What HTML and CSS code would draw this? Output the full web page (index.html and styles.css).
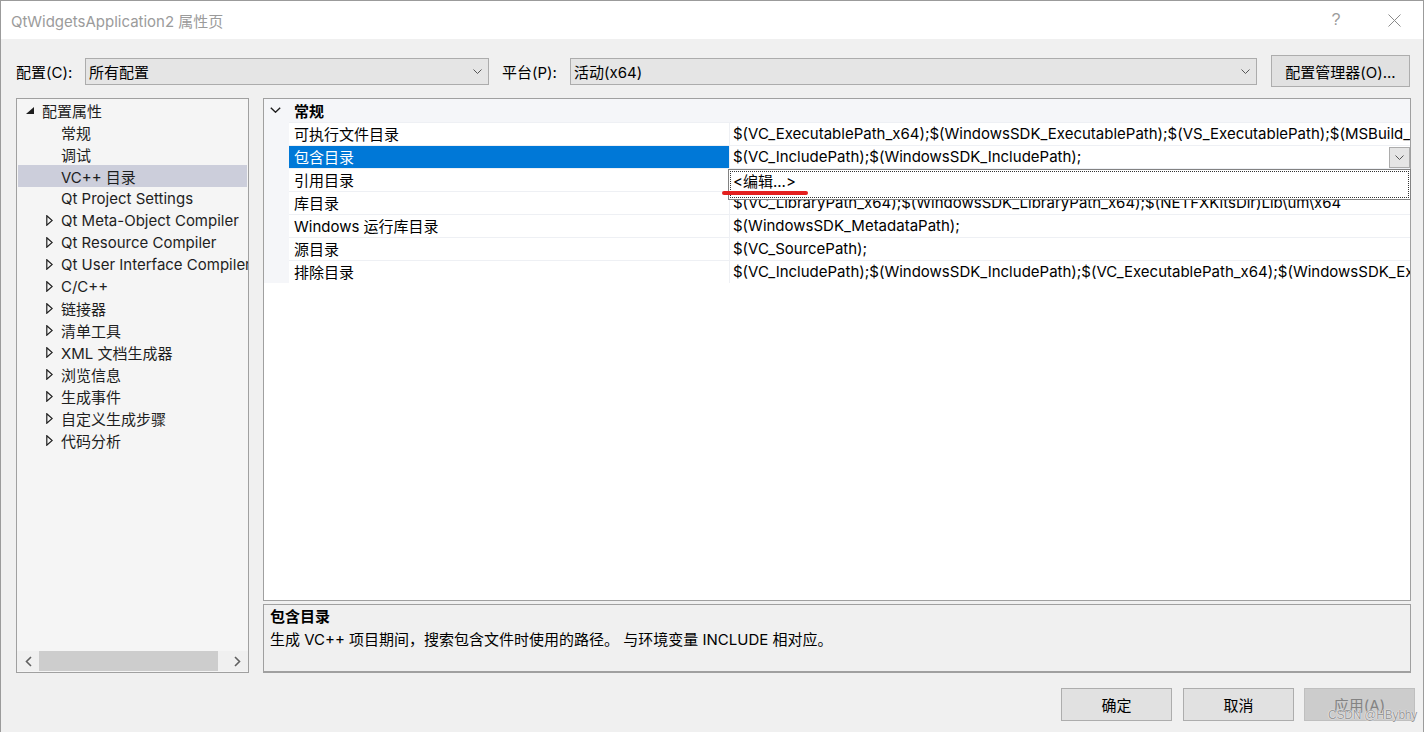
FILE: index.html
```html
<!DOCTYPE html>
<html lang="zh-CN">
<head>
<meta charset="utf-8">
<title>QtWidgetsApplication2 属性页</title>
<link rel="stylesheet" href="styles.css">
</head>
<body>
<div class="dialog">
  <div class="titlebar">
    <span class="title">QtWidgetsApplication2 属性页</span>
    <span class="tb-help">?</span>
    <span class="tb-close"><svg width="13" height="13" viewBox="0 0 13 13"><path d="M0.5 0.5 L12.5 12.5 M12.5 0.5 L0.5 12.5" stroke="#8a8a8a" stroke-width="1" fill="none"/></svg></span>
  </div>
  <div class="content">
    <div class="toolbar">
      <span class="lbl lbl1">配置(C):</span>
      <div class="select sel1"><span>所有配置</span><svg class="chev" width="9" height="5" viewBox="0 0 9 5"><path d="M0.5 0.5 L4.5 4.5 L8.5 0.5" stroke="#555" stroke-width="1" fill="none"/></svg></div>
      <span class="lbl lbl2">平台(P):</span>
      <div class="select sel2"><span>活动(x64)</span><svg class="chev" width="9" height="5" viewBox="0 0 9 5"><path d="M0.5 0.5 L4.5 4.5 L8.5 0.5" stroke="#555" stroke-width="1" fill="none"/></svg></div>
      <div class="btn btn-cm">配置管理器(O)...</div>
    </div>
    <div class="main">
      <div class="tree">
        <div class="tree-list">
          <div class="ti root"><svg class="tri-down" width="8" height="7" viewBox="0 0 8 7"><path d="M8 0 L8 7 L0 7 Z" fill="#1e1e1e"/></svg><span>配置属性</span></div>
          <div class="ti leaf">常规</div>
          <div class="ti leaf">调试</div>
          <div class="ti leaf sel">VC++ 目录</div>
          <div class="ti leaf">Qt Project Settings</div>
          <div class="ti exp"><svg class="tri" width="7" height="11" viewBox="0 0 7 11"><path d="M0.8 0.8 L6.2 5.5 L0.8 10.2 Z" fill="none" stroke="#1e1e1e" stroke-width="1.2"/></svg><span>Qt Meta-Object Compiler</span></div>
          <div class="ti exp"><svg class="tri" width="7" height="11" viewBox="0 0 7 11"><path d="M0.8 0.8 L6.2 5.5 L0.8 10.2 Z" fill="none" stroke="#1e1e1e" stroke-width="1.2"/></svg><span>Qt Resource Compiler</span></div>
          <div class="ti exp"><svg class="tri" width="7" height="11" viewBox="0 0 7 11"><path d="M0.8 0.8 L6.2 5.5 L0.8 10.2 Z" fill="none" stroke="#1e1e1e" stroke-width="1.2"/></svg><span>Qt User Interface Compiler</span></div>
          <div class="ti exp"><svg class="tri" width="7" height="11" viewBox="0 0 7 11"><path d="M0.8 0.8 L6.2 5.5 L0.8 10.2 Z" fill="none" stroke="#1e1e1e" stroke-width="1.2"/></svg><span>C/C++</span></div>
          <div class="ti exp"><svg class="tri" width="7" height="11" viewBox="0 0 7 11"><path d="M0.8 0.8 L6.2 5.5 L0.8 10.2 Z" fill="none" stroke="#1e1e1e" stroke-width="1.2"/></svg><span>链接器</span></div>
          <div class="ti exp"><svg class="tri" width="7" height="11" viewBox="0 0 7 11"><path d="M0.8 0.8 L6.2 5.5 L0.8 10.2 Z" fill="none" stroke="#1e1e1e" stroke-width="1.2"/></svg><span>清单工具</span></div>
          <div class="ti exp"><svg class="tri" width="7" height="11" viewBox="0 0 7 11"><path d="M0.8 0.8 L6.2 5.5 L0.8 10.2 Z" fill="none" stroke="#1e1e1e" stroke-width="1.2"/></svg><span>XML 文档生成器</span></div>
          <div class="ti exp"><svg class="tri" width="7" height="11" viewBox="0 0 7 11"><path d="M0.8 0.8 L6.2 5.5 L0.8 10.2 Z" fill="none" stroke="#1e1e1e" stroke-width="1.2"/></svg><span>浏览信息</span></div>
          <div class="ti exp"><svg class="tri" width="7" height="11" viewBox="0 0 7 11"><path d="M0.8 0.8 L6.2 5.5 L0.8 10.2 Z" fill="none" stroke="#1e1e1e" stroke-width="1.2"/></svg><span>生成事件</span></div>
          <div class="ti exp"><svg class="tri" width="7" height="11" viewBox="0 0 7 11"><path d="M0.8 0.8 L6.2 5.5 L0.8 10.2 Z" fill="none" stroke="#1e1e1e" stroke-width="1.2"/></svg><span>自定义生成步骤</span></div>
          <div class="ti exp"><svg class="tri" width="7" height="11" viewBox="0 0 7 11"><path d="M0.8 0.8 L6.2 5.5 L0.8 10.2 Z" fill="none" stroke="#1e1e1e" stroke-width="1.2"/></svg><span>代码分析</span></div>
        </div>
        <div class="hscroll">
          <div class="sb-arrow"><svg width="7" height="11" viewBox="0 0 7 11"><path d="M6 1 L1.5 5.5 L6 10" stroke="#606060" stroke-width="1.6" fill="none"/></svg></div>
          <div class="sb-track"><div class="sb-thumb"></div></div>
          <div class="sb-arrow"><svg width="7" height="11" viewBox="0 0 7 11"><path d="M1 1 L5.5 5.5 L1 10" stroke="#606060" stroke-width="1.6" fill="none"/></svg></div>
        </div>
      </div>
      <div class="right">
        <div class="grid">
          <div class="grid-head"><svg class="head-chev" width="11" height="6" viewBox="0 0 11 6"><path d="M0.8 0.8 L5.5 5.2 L10.2 0.8" stroke="#1e1e1e" stroke-width="1.4" fill="none"/></svg><span>常规</span></div>
          <div class="grid-body">
            <div class="gutter"></div>
            <div class="rows">
              <div class="row"><div class="name">可执行文件目录</div><div class="val">$(VC_ExecutablePath_x64);$(WindowsSDK_ExecutablePath);$(VS_ExecutablePath);$(MSBuild_ExecutablePath);$(FxCopDir);$(PATH);</div></div>
              <div class="row sel"><div class="name">包含目录</div><div class="val">$(VC_IncludePath);$(WindowsSDK_IncludePath);<div class="ddbtn"><svg width="9" height="5" viewBox="0 0 9 5"><path d="M0.5 0.5 L4.5 4.5 L8.5 0.5" stroke="#555" stroke-width="1" fill="none"/></svg></div></div></div>
              <div class="row"><div class="name">引用目录</div><div class="val">$(VC_ReferencesPath_x64);</div></div>
              <div class="row"><div class="name">库目录</div><div class="val">$(VC_LibraryPath_x64);$(WindowsSDK_LibraryPath_x64);$(NETFXKitsDir)Lib\um\x64</div></div>
              <div class="row"><div class="name">Windows 运行库目录</div><div class="val">$(WindowsSDK_MetadataPath);</div></div>
              <div class="row"><div class="name">源目录</div><div class="val">$(VC_SourcePath);</div></div>
              <div class="row"><div class="name">排除目录</div><div class="val">$(VC_IncludePath);$(WindowsSDK_IncludePath);$(VC_ExecutablePath_x64);$(WindowsSDK_ExecutablePath);$(VS_ExecutablePath);</div></div>
            </div>
          </div>
        </div>
        <div class="desc">
          <div class="desc-title">包含目录</div>
          <div class="desc-text">生成 VC++ 项目期间，搜索包含文件时使用的路径。 与环境变量 INCLUDE 相对应。</div>
        </div>
        <div class="popup"><div class="popup-inner"><span class="popup-text">&lt;编辑...&gt;</span></div></div>
        <div class="mark"></div>
      </div>
    </div>
    <div class="footer">
      <div class="btn btn-ok">确定</div>
      <div class="btn btn-cancel">取消</div>
      <div class="btn btn-apply disabled">应用(A)</div>
    </div>
  </div>
</div>
<div class="watermark">CSDN @HBybhy</div>
</body>
</html>
```
FILE: styles.css
```css
* { box-sizing: border-box; }
html, body { margin: 0; padding: 0; }
body {
  width: 1425px;
  height: 732px;
  overflow: hidden;
  background: #ffffff;
  font-family: Inter, "Noto Sans CJK SC", sans-serif;
  font-size: 15px;
  color: #000;
  position: relative;
}
.dialog {
  width: 1424px;
  height: 732px;
  border: 1px solid #9b9b9b;
  border-bottom: none;
  background: #f0f0f0;
  display: flex;
  flex-direction: column;
}
.titlebar {
  height: 38px;
  flex: none;
  background: #fff;
  display: flex;
  align-items: center;
  padding-left: 10px;
}
.title { color: #9b9b9b; }
.tb-help {
  margin-left: auto;
  width: 46px;
  text-align: center;
  color: #9b9b9b;
  font-size: 16px;
  font-family: "Liberation Sans", sans-serif;
}
.tb-close {
  width: 46px;
  margin-left: 12px;
  margin-right: 6px;
  display: flex;
  justify-content: center;
  align-items: center;
}
.content {
  flex: 1;
  padding-left: 15px;
  display: flex;
  flex-direction: column;
}
.toolbar {
  margin-top: 16px;
  height: 32px;
  display: flex;
  align-items: center;
}
.lbl { white-space: nowrap; }
.lbl1 { width: 69px; }
.lbl2 { margin-left: 13px; width: 68px; }
.select {
  height: 27px;
  background: #e5e5e5;
  border: 1px solid #acacac;
  display: flex;
  align-items: center;
  padding-left: 3px;
  padding-right: 6px;
}
.select .chev { margin-left: auto; }
.sel1 { width: 404px; }
.sel2 { width: 687px; }
.btn {
  height: 33px;
  background: #e1e1e1;
  border: 1px solid #adadad;
  display: flex;
  align-items: center;
  justify-content: center;
  white-space: nowrap;
}
.btn-cm { margin-left: 14px; width: 139px; height: 32px; }

.main {
  margin-top: 11px;
  height: 575px;
  display: flex;
}
.tree {
  width: 233px;
  border: 1px solid #a0a0a0;
  background: #f5f5f5;
  display: flex;
  flex-direction: column;
}
.tree-list {
  flex: 1;
  padding-top: 0;
  overflow: hidden;
}
.ti {
  height: 22px;
  display: flex;
  align-items: center;
  white-space: nowrap;
  overflow: hidden;
  color: #1e1e1e;
}
.ti.root { padding-left: 9px; }
.ti.root .tri-down { margin-right: 8px; flex: none; }
.ti.leaf { padding-left: 44px; }
.ti.exp { padding-left: 29px; }
.ti.exp .tri { margin-right: 8px; flex: none; }
.ti.sel { background: #cccedb; margin: 0 1px; padding-left: 43px; }
.hscroll {
  height: 20px;
  margin-bottom: 1px;
  background: #f0f0f0;
  display: flex;
}
.sb-arrow {
  width: 22px;
  display: flex;
  align-items: center;
  justify-content: center;
}
.sb-track { flex: 1; }
.sb-thumb { width: 179px; height: 100%; background: #cdcdcd; }

.right {
  margin-left: 14px;
  width: 1148px;
  display: flex;
  flex-direction: column;
  position: relative;
}
.grid {
  height: 504px;
  border: 1px solid #a0a0a0;
  background: #fff;
  overflow: hidden;
}
.grid-head {
  height: 23px;
  background: #f5f6f9;
  display: flex;
  align-items: center;
  padding-left: 6px;
  padding-bottom: 1px;
  font-weight: bold;
}
.head-chev { margin-right: 13px; }
.grid-body { display: flex; }
.gutter { width: 25px; background: #f5f6f9; flex: none; }
.rows { flex: 1; min-width: 0; }
.row {
  display: flex;
  height: 23px;
  border-top: 1px solid #eef0f4;
}
.name {
  width: 441px;
  flex: none;
  padding-left: 5px;
  padding-bottom: 1px;
  border-right: 1px solid #eef0f4;
  display: flex;
  align-items: center;
  white-space: nowrap;
}
.val {
  flex: 1;
  min-width: 0;
  padding-left: 3px;
  padding-bottom: 1px;
  white-space: nowrap;
  overflow: hidden;
  display: flex;
  align-items: center;
  position: relative;
}
.row.sel .name { background: #0078d7; color: #fff; }
.ddbtn {
  position: absolute;
  right: 0;
  top: 1px;
  width: 21px;
  height: 21px;
  background: #e5e5e5;
  border: 1px solid #acacac;
  display: flex;
  align-items: center;
  justify-content: center;
}
.desc {
  margin-top: 3px;
  height: 69px;
  border: 1px solid #a0a0a0;
  border-bottom-width: 2px;
  background: #f0f0f0;
  padding-left: 6px;
  line-height: 23px;
}
.desc-title { font-weight: bold; }
.popup {
  position: absolute;
  left: 465px;
  top: 71px;
  width: 683px;
  height: 31px;
  background: #fff;
  border: 1px solid #828282;
  padding: 1px;
}
.popup-inner {
  height: 100%;
  border: 1px dotted #333;
  padding-left: 2px;
}
.popup-text { display: block; line-height: 19px; }
.mark {
  position: absolute;
  left: 459px;
  top: 93px;
  width: 86px;
  height: 4px;
  border-radius: 2px;
  background: #e3201f;
}
.footer {
  margin-top: 15px;
  display: flex;
  justify-content: flex-end;
  padding-right: 8px;
}
.footer .btn { width: 111px; }
.btn-cancel { margin-left: 11px; }
.btn-apply { margin-left: 10px; }
.btn.disabled { background: #cccccc; border-color: #bfbfbf; color: #838383; }
.watermark {
  position: absolute;
  left: 1328px;
  top: 708px;
  font-family: "Liberation Sans", sans-serif;
  font-size: 12px;
  letter-spacing: -0.2px;
  color: #9a9a9a;
  text-shadow: 0 0 1px #fff, 0 0 1px #fff;
}
```
